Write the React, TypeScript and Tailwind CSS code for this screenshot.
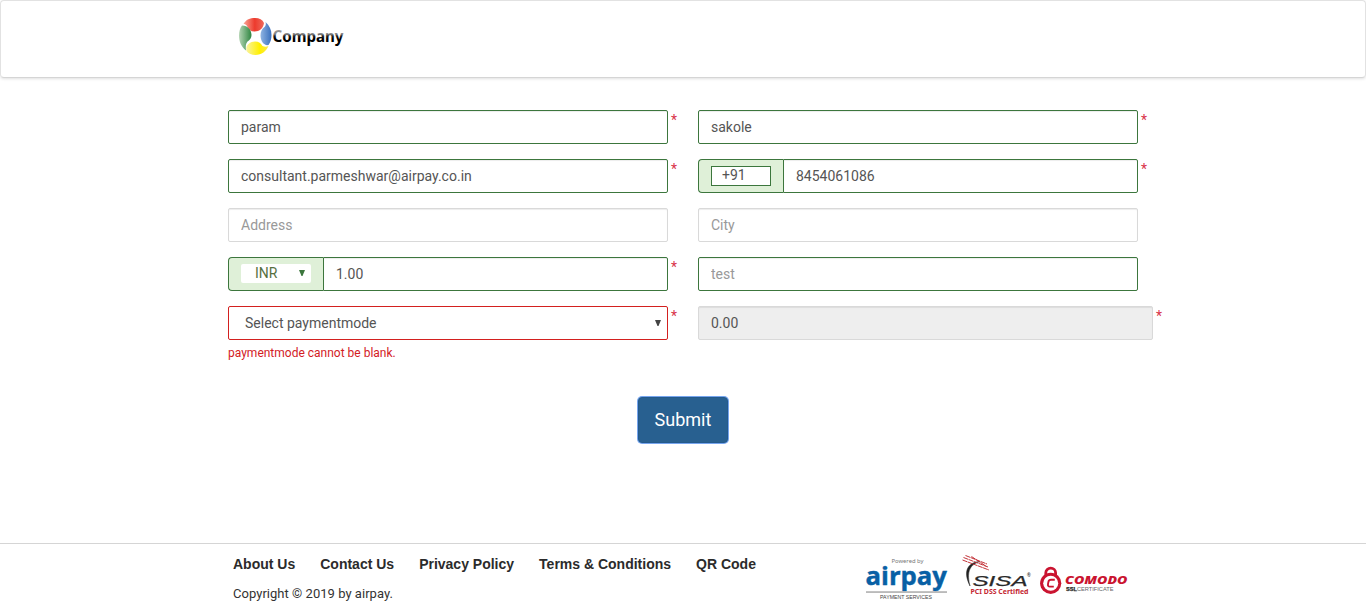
import React from "react";

const base =
  "h-[34px] w-full min-w-0 rounded-[2px] border bg-white px-3 text-[14px] leading-5 text-[#555] outline-none placeholder:text-[#999]";
const valid = "border-[#3c763d] shadow-[inset_0_1px_1px_rgba(0,0,0,0.075)]";
const plain = "border-[#d9d9d9] shadow-[inset_0_1px_1px_rgba(0,0,0,0.075)]";

function Field({ required, wide, children }: { required?: boolean; wide?: boolean; children: React.ReactNode }) {
  return (
    <div className={wide ? "relative flex h-[34px] w-[455px]" : "relative flex h-[34px] w-[440px]"}>
      {children}
      {required && (
        <span className="absolute top-0 left-full ml-[3px] text-[14px] leading-5 text-[#d9344a]">*</span>
      )}
    </div>
  );
}

function CompanyLogo() {
  return (
    <svg width="120" height="44" viewBox="0 0 120 44" className="block overflow-visible">
      <defs>
        <linearGradient id="cr" x1="0" x2="1"><stop offset="0" stopColor="#f9a595" /><stop offset=".55" stopColor="#ed3a2d" /><stop offset="1" stopColor="#ee6a5c" /></linearGradient>
        <linearGradient id="cg" x1="0" x2="1"><stop offset="0" stopColor="#b5d5b5" /><stop offset="1" stopColor="#2e8540" /></linearGradient>
        <linearGradient id="cb" x1="0" x2="1"><stop offset="0" stopColor="#8fb4e2" /><stop offset="1" stopColor="#3a70bd" /></linearGradient>
        <linearGradient id="cy" x1="0" x2="1"><stop offset="0" stopColor="#f9f3a0" /><stop offset=".6" stopColor="#fff000" /><stop offset="1" stopColor="#fbe94a" /></linearGradient>
        <linearGradient id="ct" x1="0" y1="13" x2="0" y2="31" gradientUnits="userSpaceOnUse"><stop offset="0" stopColor="#a5a5a5" /><stop offset=".34" stopColor="#858585" /><stop offset=".45" stopColor="#222" /><stop offset=".6" stopColor="#000" /></linearGradient>
      </defs>
      <path d="M6.5 9C9 4.500 13 3 18 3c4.500 0 7.500 1.500 9 5-.5 5-4.500 8.500-9.500 8.500-4 0-6.500-2-7.500-5.500-1-1.500-2-2-3.500-2Z" fill="url(#cr)" />
      <path d="M28.5 7c4 3.500 6 8 6 13 0 4-1 7-3 10-4.500 1-8-4-8-9.500 0-4 1.500-6.500 4-8.500 1.300-1.200 1.700-3 1-5Z" fill="url(#cb)" />
      <path d="M5 10.500c6 0 9.500 4.500 9.500 9.500 0 3-1.500 5-4 6.500-1.800 2-2 5-1.500 9-5-4-7-9-7-15 0-4 1-7.500 3-10Z" fill="url(#cg)" />
      <path d="M9.500 36c-1.500-5 3-9.500 8.500-9.500 4 0 6 2 7.500 4.500 2 1 4 1 6 0-2 5-7 9-13 9-4 0-7-1.500-9-4Z" fill="url(#cy)" />
      <text x="35.5" y="26.6" fontFamily="Noto Sans" fontWeight="700" fontSize="16.5" textLength="71" lengthAdjust="spacingAndGlyphs" fill="url(#ct)">Company</text>
    </svg>
  );
}

function AirpayLogo() {
  return (
    <svg width="84" height="48" viewBox="0 0 84 48" className="block">
      <text x="26.5" y="8.6" fontFamily="Noto Sans" fontSize="6" fill="#777" textLength="32" lengthAdjust="spacingAndGlyphs">Powered by</text>
      <text x="0.5" y="30.5" fontFamily="Open Sans" fontWeight="700" fontSize="25" fill="#0860a5" stroke="#0860a5" strokeWidth=".4" textLength="81.5" lengthAdjust="spacingAndGlyphs">airpay</text>
      <rect x="1" y="37.3" width="81" height="1.5" fill="#aaa" />
      <text x="15" y="44.5" fontFamily="Liberation Sans" fontSize="5.4" fill="#444" textLength="52" lengthAdjust="spacingAndGlyphs">PAYMENT SERVICES</text>
    </svg>
  );
}

function SisaLogo() {
  return (
    <svg width="72" height="44" viewBox="0 0 72 44" className="block">
      <path d="M19 7.500C8 8 1 16 9 32 6 20 7 11 19 7.500Z" fill="#222" stroke="#222" strokeWidth=".5" />
      <path d="M4.500 1.500 26 10M2.500 3.500 27 13M1.500 6 28 16M10.500 2.500 25.500 12.500" fill="none" stroke="#c4343a" strokeWidth="1" strokeDasharray="5 .5" />
      <text x="11.5" y="31.7" fontFamily="Liberation Sans" fontStyle="italic" fontSize="14.2" fill="#292929" stroke="#292929" strokeWidth=".25" textLength="55" lengthAdjust="spacingAndGlyphs">SISA</text>
      <text x="66" y="23" fontFamily="Liberation Sans" fontWeight="700" fontSize="5" fill="#333">®</text>
      <text x="9.5" y="39.5" fontFamily="Noto Sans" fontWeight="700" fontSize="6.5" fill="#c42731" textLength="58" lengthAdjust="spacingAndGlyphs">PCI DSS Certified</text>
    </svg>
  );
}

function ComodoLogo() {
  return (
    <svg width="90" height="32" viewBox="0 0 90 32" className="block">
      <path d="M6.8 11.500V8.700a4.900 4.600 0 0 1 9.800 0v2.800" fill="none" stroke="#ca1430" strokeWidth="2.8" />
      <circle cx="11.700" cy="19.300" r="10.600" fill="#ca1430" />
      <circle cx="11.700" cy="19.300" r="7.500" fill="#fff" />
      <path d="M15.800 15.800H12c-1.600 0-2.300.8-2.600 2.100l-.4 2.200c-.3 1.700.3 2.500 1.900 2.500h3.900" fill="none" stroke="#ca1430" strokeWidth="1.9" />
      <text x="26" y="20" fontFamily="Open Sans" fontWeight="800" fontStyle="italic" fontSize="10" fill="#ca1430" textLength="62.5" lengthAdjust="spacingAndGlyphs">COMODO</text>
      <text x="27" y="26.5" fontFamily="Liberation Sans" fontWeight="700" fontSize="6.2" fill="#222" stroke="#222" strokeWidth=".25" textLength="11" lengthAdjust="spacingAndGlyphs">SSL</text>
      <text x="38" y="26.5" fontFamily="Liberation Sans" fontSize="6.2" fill="#666" textLength="36.5" lengthAdjust="spacingAndGlyphs">CERTIFICATE</text>
    </svg>
  );
}

const links = ["About Us", "Contact Us", "Privacy Policy", "Terms & Conditions", "QR Code"];

export default function App() {
  return (
    <div className="flex h-[613px] flex-col overflow-hidden bg-white font-['Roboto',sans-serif] text-[#333]">
      <header className="h-[78px] shrink-0 rounded-[4px] border border-[#e2e2e2] border-b-[#d5d5d5] pt-[14px] pl-[236px] shadow-[0_1px_3px_rgba(0,0,0,0.12)]">
        <CompanyLogo />
      </header>

      <main className="flex h-[465px] shrink-0 flex-col pt-8">
        <form className="ml-[228px] grid grid-cols-[440px_455px] gap-x-[30px] gap-y-[15px]" onSubmit={(e) => e.preventDefault()}>
          <Field required><input className={`${base} ${valid}`} defaultValue="param" /></Field>
          <Field required><input className={`${base} ${valid}`} defaultValue="sakole" /></Field>
          <Field required><input className={`${base} ${valid}`} defaultValue="consultant.parmeshwar@airpay.co.in" /></Field>
          <Field required>
            <div className="flex w-[85px] shrink-0 rounded-l-[4px] border border-r-0 border-[#3c763d] bg-[#dff0d8] pt-[6px] pl-3">
              <input className="h-5 w-[60px] border border-[#3c763d] bg-white pb-[2px] pl-[10px] text-[14px] leading-4 text-[#555] outline-none" defaultValue="+91" />
            </div>
            <input className={`${base} ${valid} rounded-l-none`} defaultValue="8454061086" />
          </Field>
          <Field><input className={`${base} ${plain}`} placeholder="Address" /></Field>
          <Field><input className={`${base} ${plain}`} placeholder="City" /></Field>
          <Field required>
            <div className="flex w-[95px] shrink-0 rounded-l-[4px] border border-r-0 border-[#3c763d] bg-[#dff0d8] pt-[6px] pl-3">
              <div className="flex h-[19px] w-[70px] items-center justify-between rounded-[2px] bg-white pr-[6px] pl-[14px] text-[14px] leading-[19px] text-[#55703f]">
                <span>INR</span>
                <svg width="6" height="6" viewBox="0 0 6 6" className="mb-[2px]"><path d="M0 0h6L3.500 6h-1Z" fill="#3c763d" /></svg>
              </div>
            </div>
            <input className={`${base} ${valid} rounded-l-none`} defaultValue="1.00" />
          </Field>
          <Field><input className={`${base} ${valid}`} placeholder="test" /></Field>
          <Field required>
            <div className="flex h-[34px] w-full items-center justify-between rounded-[2px] border border-[#d3201f] bg-white pr-[6px] pl-4 text-[14px] leading-5 text-[#555]">
              <span>Select paymentmode</span>
              <svg width="6" height="6" viewBox="0 0 6 6"><path d="M0 0h6L3.500 6h-1Z" fill="#444" /></svg>
            </div>
          </Field>
          <Field required wide><input readOnly className="h-[34px] w-full rounded-[2px] border border-[#d9d9d9] bg-[#eee] px-3 text-[14px] leading-5 text-[#555] shadow-[inset_0_1px_1px_rgba(0,0,0,0.075)] outline-none" defaultValue="0.00" /></Field>
        </form>
        <p className="mt-1 ml-[228px] text-[12px] leading-[18px] text-[#d3201f]">paymentmode cannot be blank.</p>
        <button className="mt-[35px] ml-[638px] h-[46px] w-[90px] rounded-[4px] border border-[#245a8c] bg-[#286090] text-[18px] leading-6 text-white shadow-[0_0_0_1px_#76a5ee]">Submit</button>
      </main>

      <footer className="flex h-[70px] shrink-0 border-t border-[#d5d5d5] pl-[233px]">
        <div className="w-[632px] pt-[10px]">
          <nav className="flex gap-[25px] font-['Liberation_Sans',sans-serif] text-[14px] leading-5 font-bold whitespace-nowrap text-[#2b2b2b]">
            {links.map((l) => <a key={l} href="#">{l}</a>)}
          </nav>
          <p className="mt-[11px] text-[13px] leading-[18px] tracking-[0.03px]">Copyright © 2019 by airpay.</p>
        </div>
        <div className="pt-[10px]"><AirpayLogo /></div>
        <div className="ml-3 pt-[10px]"><SisaLogo /></div>
        <div className="ml-[6px] pt-[20px]"><ComodoLogo /></div>
      </footer>
    </div>
  );
}
